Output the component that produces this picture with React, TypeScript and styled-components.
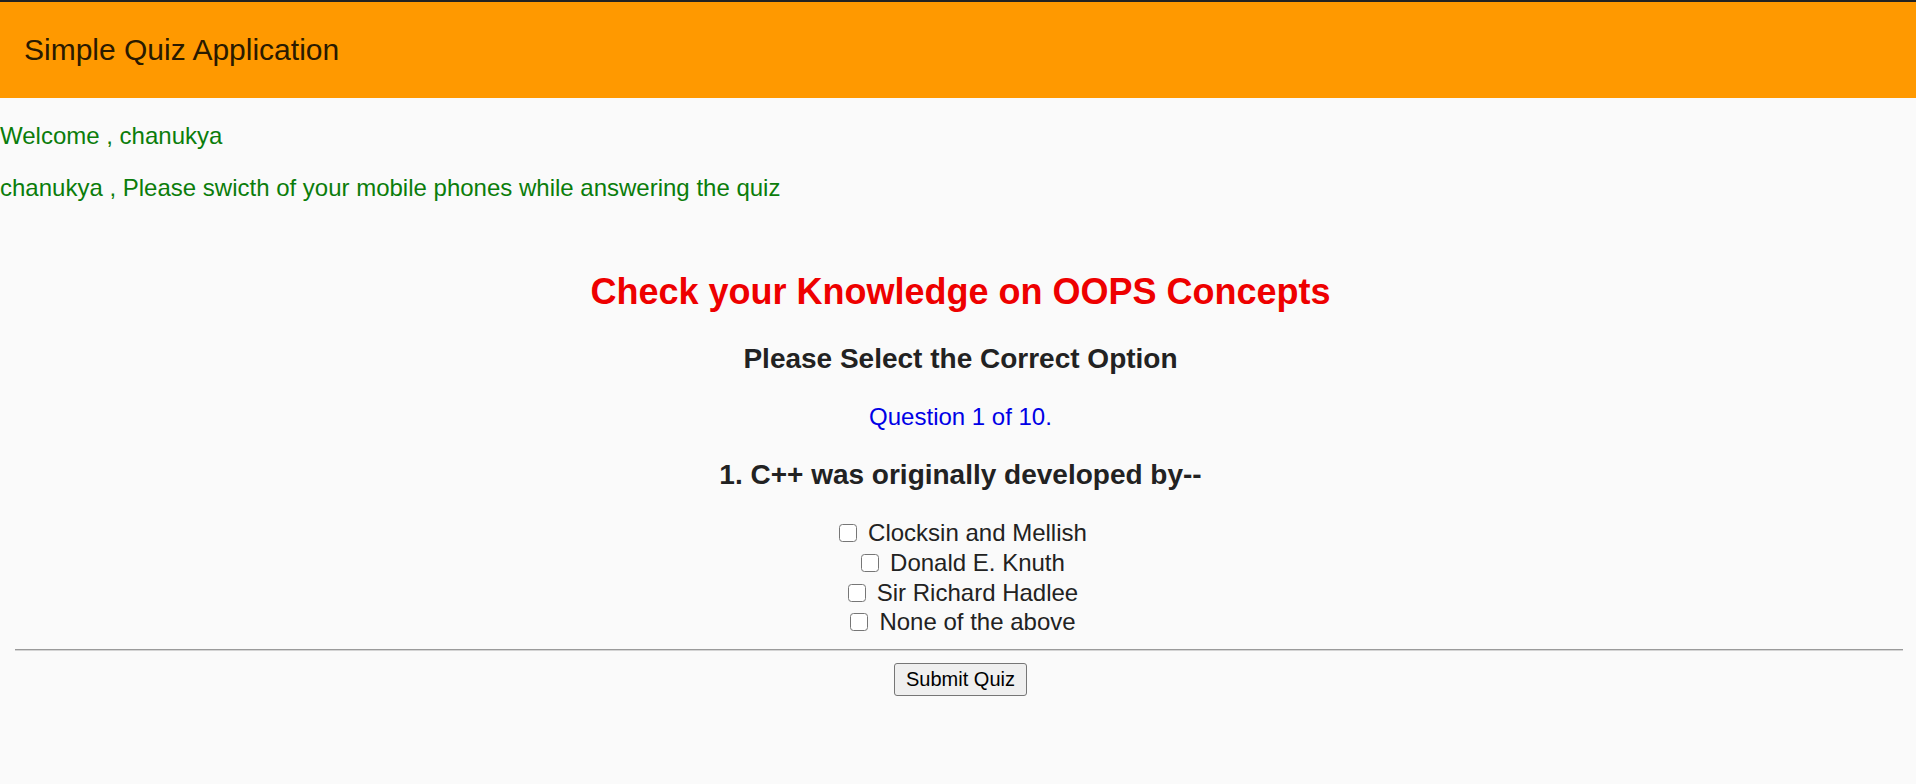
import React from "react";
import styled, { createGlobalStyle } from "styled-components";

const GlobalStyle = createGlobalStyle`
  html, body {
    margin: 0;
    padding: 0;
    background: #fafafa;
  }
  body {
    font-family: "Liberation Sans", Arial, Helvetica, sans-serif;
    font-size: 24px;
    color: #222222;
  }
  * { box-sizing: border-box; }
`;

const Page = styled.div`
  display: flex;
  flex-direction: column;
  min-height: 784px;
  background: #fafafa;
`;

const Header = styled.header`
  display: flex;
  align-items: center;
  height: 98px;
  border-top: 2px solid #222222;
  background: #ff9900;
  padding-left: 24px;
`;

const Brand = styled.span`
  font-size: 30px;
  line-height: 1.15;
  color: #2a1a00;
`;

const Notice = styled.p<{ $top: number }>`
  margin: ${(p) => p.$top}px 0 0 0;
  font-size: 24px;
  line-height: 27.6px;
  color: #0b7d0b;
`;

const Quiz = styled.main`
  display: flex;
  flex-direction: column;
  align-items: stretch;
  text-align: center;
  padding-left: 5px;
`;

const Title = styled.h2`
  margin: 70px 0 0 0;
  font-size: 36px;
  line-height: 41.4px;
  font-weight: 700;
  color: #ee0000;
`;

const SubTitle = styled.h3<{ $top: number }>`
  margin: ${(p) => p.$top}px 0 0 0;
  font-size: 28px;
  line-height: 32.2px;
  font-weight: 700;
  color: #222222;
`;

const Counter = styled.div`
  margin-top: 28px;
  font-size: 24px;
  line-height: 27.6px;
  color: #0000e6;
`;

const Options = styled.div`
  margin-top: 27px;
  display: flex;
  flex-direction: column;
`;

const Option = styled.label`
  display: flex;
  justify-content: center;
  align-items: center;
  height: 29.6px;
  font-size: 24px;
  color: #222222;
  cursor: pointer;
`;

const Check = styled.input`
  appearance: none;
  -webkit-appearance: none;
  width: 18px;
  height: 18px;
  margin: 0 11px 0 5px;
  border: 1px solid #767676;
  border-radius: 3.5px;
  background: #ffffff;
  flex: none;
  &:checked {
    background: #0075ff;
    border-color: #0075ff;
  }
`;

const Rule = styled.hr`
  margin: 12px 13px 0 10px;
  height: 0;
  border: none;
  border-top: 1px solid #9a9a9a;
  border-bottom: 1px solid #d4d4d4;
`;

const Actions = styled.div`
  display: flex;
  justify-content: center;
  margin-top: 12px;
`;

const SubmitButton = styled.button`
  font-family: "Liberation Sans", Arial, sans-serif;
  font-size: 20px;
  line-height: 23px;
  padding: 4px 11px;
  color: #000000;
  background: #efefef;
  border: 1px solid #767676;
  border-radius: 3px;
`;

const options = [
  "Clocksin and Mellish",
  "Donald E. Knuth",
  "Sir Richard Hadlee",
  "None of the above",
];

export default function App() {
  return (
    <>
      <GlobalStyle />
      <Page>
        <Header>
          <Brand>Simple Quiz Application</Brand>
        </Header>
        <Notice $top={24}>Welcome , chanukya</Notice>
        <Notice $top={24}>
          chanukya , Please swicth of your mobile phones while answering the quiz
        </Notice>
        <Quiz>
          <Title>Check your Knowledge on OOPS Concepts</Title>
          <SubTitle $top={30}>Please Select the Correct Option</SubTitle>
          <Counter>Question 1 of 10.</Counter>
          <SubTitle $top={29}>1. C++ was originally developed by--</SubTitle>
          <Options>
            {options.map((o) => (
              <Option key={o}>
                <Check type="checkbox" name="answer" value={o} />
                {o}
              </Option>
            ))}
          </Options>
          <Rule />
          <Actions>
            <SubmitButton type="button">Submit Quiz</SubmitButton>
          </Actions>
        </Quiz>
      </Page>
    </>
  );
}
